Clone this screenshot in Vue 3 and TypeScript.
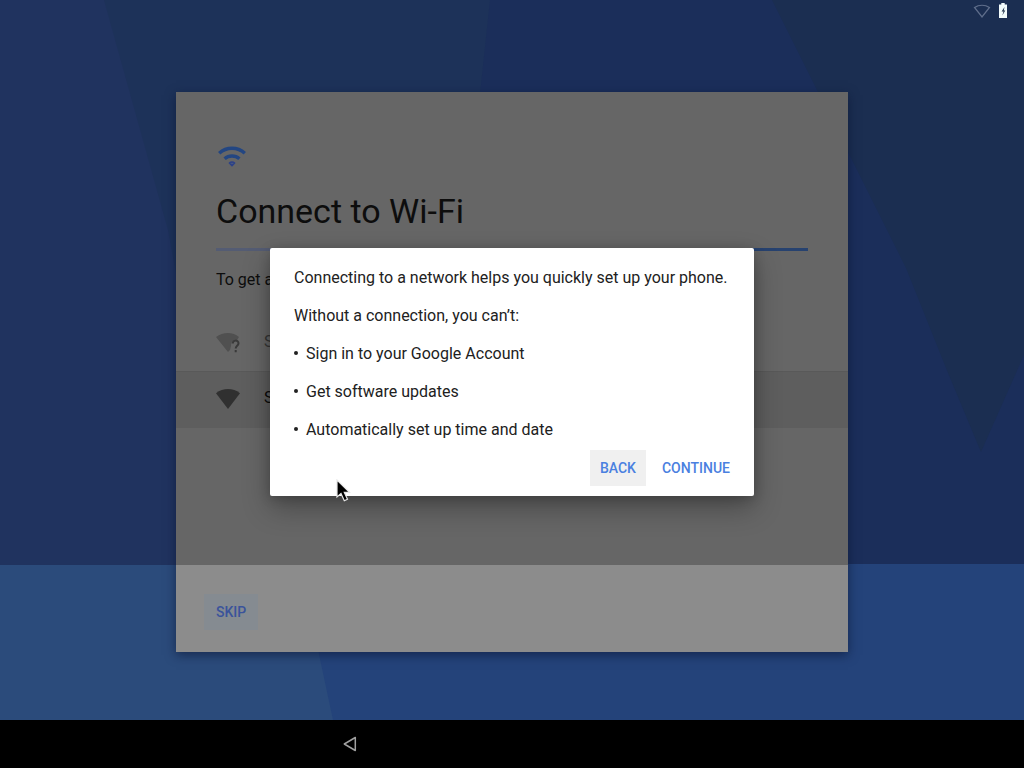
<script setup lang="ts">
interface Network {
  name: string
  known: boolean
}

const networks: Network[] = [
  { name: 'S', known: false },
  { name: 'S', known: true },
]

const limits: string[] = [
  'Sign in to your Google Account',
  'Get software updates',
  'Automatically set up time and date',
]
</script>

<template>
  <div class="screen">
    <svg class="wallpaper" viewBox="0 0 1024 720" preserveAspectRatio="none" aria-hidden="true">
      <rect width="1024" height="720" fill="#1d3259" />
      <path d="M0 0H104L168 230L230 565H0Z" fill="#20335f" />
      <path d="M490 0H1024V565H430Z" fill="#1b2e5a" />
      <path d="M772 0H1024V355L981 452L946 368L906 268L866 188Z" fill="#1b2e51" />
      <path d="M0 565H828V564H1024V720H0Z" fill="#24437a" />
      <path d="M0 565H300L333 720H0Z" fill="#2b4b7b" />
    </svg>

    <header class="status">
      <svg width="18" height="16" viewBox="0 0 18 16" role="img" aria-label="Wi-Fi disconnected">
        <path d="M1.5 4.5C6 1.600 12 1.600 16.500 4.500L9 14Z" fill="none" stroke="#5f6e8b" stroke-width="1.300" />
      </svg>
      <svg width="8" height="16" viewBox="0 0 8 16" role="img" aria-label="Battery charging">
        <path d="M2.300 0H5.700V1.500H8V15H0V1.500H2.300Z" fill="#f2fbfb" />
        <path d="M5.500 4L2.600 8.500H4.500L3.300 12.500L6.300 7.600H4.800Z" fill="#26384f" />
      </svg>
    </header>

    <main class="stage">
      <section class="card">
        <div class="content">
          <div class="intro">
            <svg class="logo" width="32" height="32" viewBox="0 0 32 32" aria-hidden="true">
              <g fill="none" stroke="#234682" stroke-width="3.400">
                <path d="M3.200 13.200C10.500 6.600 21.500 6.600 28.800 13.200" />
                <path d="M8.600 18.800C12.800 15 19.200 15 23.400 18.800" />
              </g>
              <path
                d="M13.400 23C14.800 21.700 17.200 21.700 18.600 23L16 25.600Z"
                fill="#4b5a80"
                stroke="#2d4288"
                stroke-width="1.600"
                stroke-linejoin="round"
              />
            </svg>
            <h1>Connect to Wi-Fi</h1>
            <div class="progress" role="progressbar" aria-label="Searching for networks"></div>
            <p class="lead">To get a</p>
          </div>
          <ul class="networks">
            <li v-for="(net, i) in networks" :key="i" :class="{ known: net.known }">
              <svg width="24" height="24" viewBox="0 0 24 24" aria-hidden="true">
                <path
                  v-if="net.known"
                  d="M0 6.200C7 .7 17 .7 24 6.200L12 22Z"
                  fill="#303030"
                />
                <template v-else>
                  <path d="M0 6C7 .6 17 .6 23 6L21 9C17 9 15 11 15 15L14 19L12 21Z" fill="#505050" />
                  <path
                    d="M16.800 12.500C16.800 8.700 22.500 8.700 22.500 12.300C22.500 14.800 19.700 14.800 19.700 17.500M19.700 19V21.200"
                    fill="none"
                    stroke="#3a3a3a"
                    stroke-width="2"
                  />
                </template>
              </svg>
              <span>{{ net.name }}</span>
            </li>
          </ul>
        </div>
        <footer class="footer">
          <button type="button" class="skip">SKIP</button>
        </footer>
      </section>

      <div class="dialog" role="dialog" aria-modal="true" aria-label="Connect to a network">
        <p>Connecting to a network helps you quickly set up your phone.</p>
        <p>Without a connection, you can’t:</p>
        <ul class="limits">
          <li v-for="item in limits" :key="item">{{ item }}</li>
        </ul>
        <div class="actions">
          <button type="button" class="focused">BACK</button>
          <button type="button">CONTINUE</button>
        </div>
      </div>
    </main>

    <nav class="navbar">
      <button type="button" aria-label="Back">
        <svg width="16" height="16" viewBox="0 0 16 16" aria-hidden="true">
          <path d="M2.300 8L13.300 1.500V14.500Z" fill="none" stroke="#a0a0a0" stroke-width="1.500" stroke-linejoin="round" />
        </svg>
      </button>
    </nav>

    <svg class="pointer" width="16" height="24" viewBox="0 0 16 24" aria-hidden="true">
      <path
        d="M1 1V18L5 14.500L8.300 21.800L11.500 20.300L8.300 13.400H13.500Z"
        fill="#000"
        stroke="#e8e8e8"
        stroke-width="1.200"
      />
    </svg>
  </div>
</template>

<style>
body {
  margin: 0;
  background: #000;
}
</style>

<style scoped>
.screen {
  position: relative;
  display: flex;
  flex-direction: column;
  min-height: 100vh;
  overflow: hidden;
  font-family: Roboto, "Liberation Sans", sans-serif;
  font-size: 16px;
  line-height: 22px;
  color: #212121;
}

.wallpaper {
  position: absolute;
  top: 0;
  left: 0;
  width: 100%;
  height: calc(100% - 48px);
}

.status {
  position: relative;
  display: flex;
  justify-content: flex-end;
  align-items: center;
  gap: 8px;
  height: 24px;
  padding-right: 17px;
  box-sizing: border-box;
}

.status svg {
  margin-bottom: 2px;
}

.stage {
  position: relative;
  flex: 1;
  display: grid;
  place-items: center;
}

.stage > * {
  grid-area: 1 / 1;
}

h1,
p,
ul {
  margin: 0;
  padding: 0;
  list-style: none;
}

button {
  margin: 0;
  border: 0;
  background: none;
  font: 500 14px/36px Roboto, "Liberation Sans", sans-serif;
  color: #4a80e0;
}

.card {
  display: flex;
  flex-direction: column;
  width: 100%;
  max-width: 672px;
  min-height: 560px;
  background: #666;
  box-shadow: 0 3px 10px rgba(10, 20, 50, 0.6);
}

.content {
  flex: 1;
}

.intro {
  padding: 48px 40px 0;
}

.logo {
  display: block;
}

h1 {
  margin-top: 17px;
  font-size: 34px;
  font-weight: 400;
  line-height: 44px;
  color: #0d0d0d;
}

.progress {
  height: 3px;
  margin-top: 15px;
  background: linear-gradient(90deg, #545c73 50%, #27426f 50%);
}

.lead {
  margin-top: 18px;
  color: #0d0d0d;
}

.networks {
  margin-top: 25px;
}

.networks li {
  display: flex;
  align-items: center;
  gap: 24px;
  height: 56px;
  box-sizing: border-box;
  padding: 0 40px 4px;
  color: #353535;
}

.networks .known {
  background: #5e5e5e;
  box-shadow: 0 -1px #595959;
  color: #0a0a0a;
}

.networks svg {
  margin-top: 2px;
}

.footer {
  display: flex;
  align-items: center;
  height: 87px;
  box-sizing: border-box;
  padding: 6px 28px 0;
  background: #8c8c8c;
}

.skip {
  padding: 0 12px;
  background: #858b91;
  color: #3a539b;
}

.dialog {
  width: 100%;
  max-width: 484px;
  box-sizing: border-box;
  padding: 19px 14px 10px 24px;
  border-radius: 2px;
  background: #fff;
  box-shadow: 0 12px 28px rgba(0, 0, 0, 0.3), 0 2px 12px rgba(0, 0, 0, 0.2);
}

.dialog p,
.limits li {
  margin-bottom: 16px;
}

.limits li {
  display: flex;
  align-items: center;
  gap: 8px;
}

.limits li::before {
  content: "";
  width: 4px;
  height: 4px;
  margin-bottom: 2px;
  border-radius: 50%;
  background: #212121;
}

.limits li:last-child {
  margin-bottom: 9px;
}

.actions {
  display: flex;
  justify-content: flex-end;
  gap: 6px;
}

.actions button {
  padding: 0 10px;
}

.actions .focused {
  background: #f0f0f0;
}

.navbar {
  position: relative;
  display: flex;
  align-items: center;
  height: 48px;
  padding-left: 33%;
  background: #000;
}

.navbar button {
  display: flex;
  padding: 4px;
}

.pointer {
  position: absolute;
  left: 336px;
  top: 479px;
}
</style>
